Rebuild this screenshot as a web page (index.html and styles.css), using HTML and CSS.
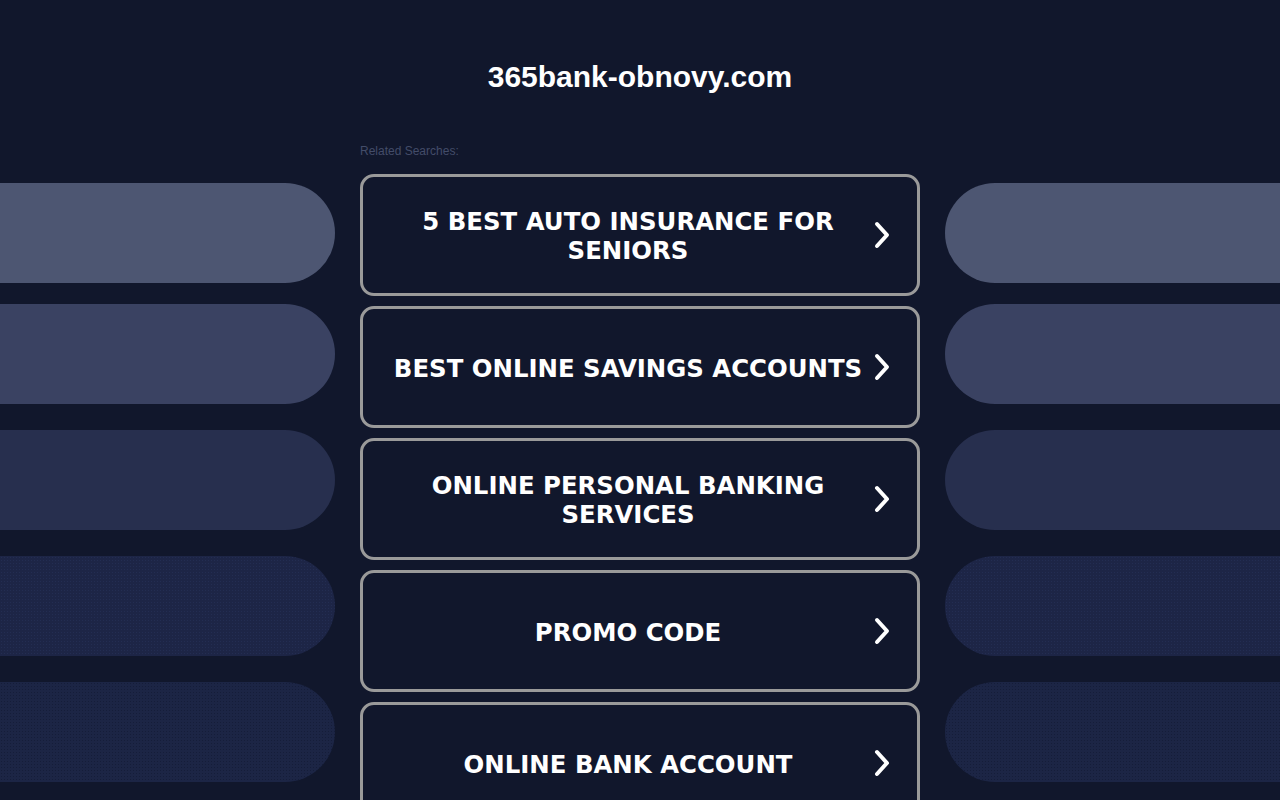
FILE: index.html
```html
<!DOCTYPE html>
<html lang="en">
<head>
<meta charset="utf-8">
<title>365bank-obnovy.com</title>
<link rel="stylesheet" href="styles.css">
</head>
<body>
<header class="header">
  <h1 class="title">365bank-obnovy.com</h1>
</header>
<main class="layout">
  <div class="side side-left">
    <div class="pill pill-1"></div>
    <div class="pill pill-2"></div>
    <div class="pill pill-3"></div>
    <div class="pill pill-4"></div>
    <div class="pill pill-5"></div>
  </div>
  <div class="center">
    <div class="label">Related Searches:</div>
    <div class="list">
      <a class="item" href="#"><span class="item-text">5 BEST AUTO INSURANCE FOR SENIORS</span><svg class="chev" viewBox="0 0 16 28"><polyline points="3,3 13,14 3,25"/></svg></a>
      <a class="item" href="#"><span class="item-text">BEST ONLINE SAVINGS ACCOUNTS</span><svg class="chev" viewBox="0 0 16 28"><polyline points="3,3 13,14 3,25"/></svg></a>
      <a class="item" href="#"><span class="item-text">ONLINE PERSONAL BANKING SERVICES</span><svg class="chev" viewBox="0 0 16 28"><polyline points="3,3 13,14 3,25"/></svg></a>
      <a class="item" href="#"><span class="item-text">PROMO CODE</span><svg class="chev" viewBox="0 0 16 28"><polyline points="3,3 13,14 3,25"/></svg></a>
      <a class="item" href="#"><span class="item-text">ONLINE BANK ACCOUNT</span><svg class="chev" viewBox="0 0 16 28"><polyline points="3,3 13,14 3,25"/></svg></a>
    </div>
  </div>
  <div class="side side-right">
    <div class="pill pill-1"></div>
    <div class="pill pill-2"></div>
    <div class="pill pill-3"></div>
    <div class="pill pill-4"></div>
    <div class="pill pill-5"></div>
  </div>
</main>
</body>
</html>
```

FILE: styles.css
```css
html, body {
  margin: 0;
  padding: 0;
  background: #11172c;
  height: 100%;
  overflow: hidden;
}

body {
  font-family: "Liberation Sans", Arial, sans-serif;
}

.header {
  padding-top: 60px;
  text-align: center;
}

.title {
  margin: 0;
  font-family: "Liberation Sans", Arial, sans-serif;
  font-weight: bold;
  font-size: 30px;
  line-height: 34px;
  color: #ffffff;
}

.layout {
  display: grid;
  grid-template-columns: 335px 560px 335px;
  column-gap: 25px;
  margin-top: 49px;
}

.side {
  display: flex;
  flex-direction: column;
  gap: 26px;
  padding-top: 40px;
}

.pill {
  height: 100px;
}

.side .pill-2 {
  margin-top: -5px;
}

.side-left .pill {
  border-radius: 0 50px 50px 0;
}

.side-right .pill {
  border-radius: 50px 0 0 50px;
}

.pill-1 { background: #4d5672; }
.pill-2 { background: #3a4262; }
.pill-3 { background: #272f4e; }
.pill-4 {
  background-color: #1d2546;
  background-image: radial-gradient(circle, rgba(50, 65, 110, 0.3) 0.6px, transparent 0.9px);
  background-size: 3px 3px;
}
.pill-5 {
  background-color: #1c2545;
  background-image: radial-gradient(circle, rgba(10, 15, 35, 0.35) 0.6px, transparent 0.9px);
  background-size: 3px 3px;
}

.label {
  font-family: "Liberation Sans", Arial, sans-serif;
  font-size: 12px;
  line-height: 14px;
  padding-top: 1px;
  color: #434c69;
  margin-bottom: 16px;
}

.list {
  display: flex;
  flex-direction: column;
  gap: 10px;
}

.item {
  box-sizing: border-box;
  height: 122px;
  border: 3px solid #9a9a9a;
  border-radius: 14px;
  display: flex;
  align-items: center;
  padding: 0 27px 0 19px;
  text-decoration: none;
  background: #11172c;
}

.item-text {
  flex: 1;
  text-align: center;
  font-family: "DejaVu Sans", Verdana, sans-serif;
  font-weight: bold;
  font-size: 24.4px;
  line-height: 29px;
  padding-top: 2px;
  color: #ffffff;
}

.chev {
  width: 16px;
  height: 28px;
  flex: none;
}

.chev polyline {
  fill: none;
  stroke: #ffffff;
  stroke-width: 4;
  stroke-linecap: round;
  stroke-linejoin: round;
}
```
